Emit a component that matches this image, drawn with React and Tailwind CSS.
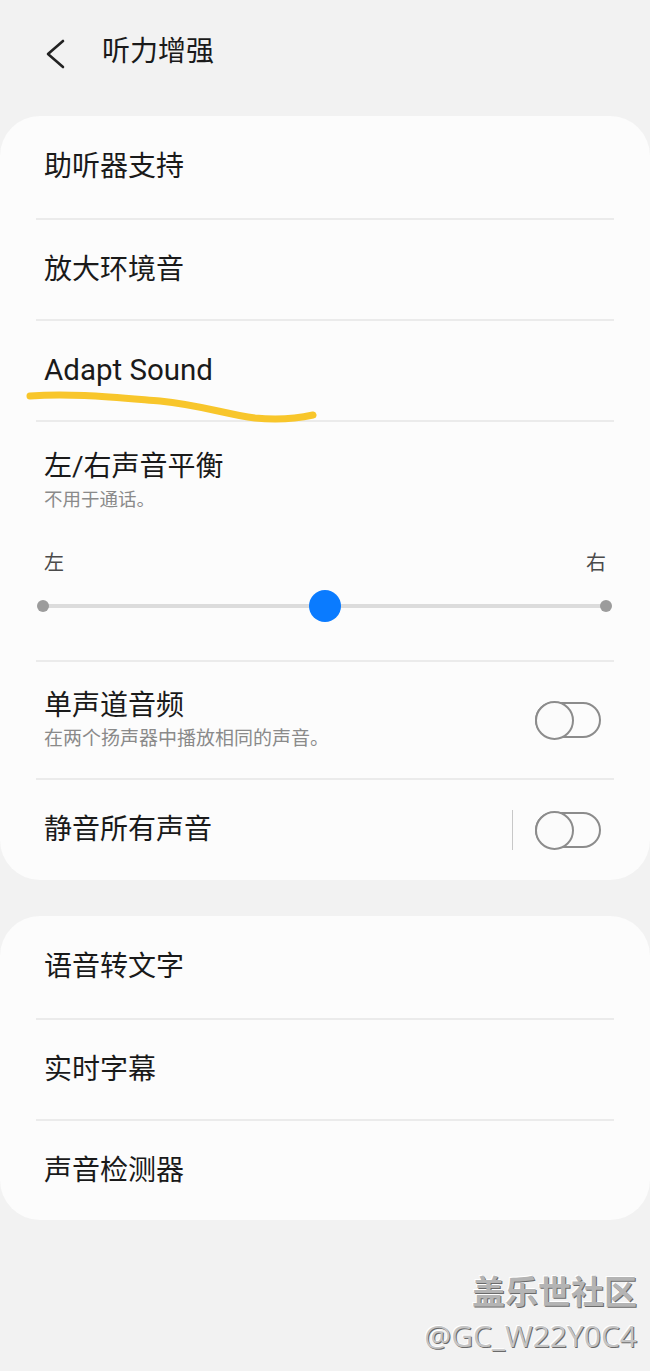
import React from 'react';

const font = { fontFamily: 'Roboto, "Noto Sans CJK SC", sans-serif' };

const Divider = () => <div className="h-[2px] bg-[#ebebeb] mx-[36px]" />;

const Row = ({ title, h = 'h-[101px]', size = 'text-[28px]' }) => (
    <div className={`${h} flex items-center px-[44px]`}>
        <span className={`${size} text-[#1a1a1a] leading-none`}>{title}</span>
    </div>
);

const Toggle = () => (
    <div className="relative w-[66px] h-[39px]">
        <div className="absolute left-0 right-0 top-[1px] h-[36px] rounded-full border-[2.5px] border-[#8c8c8c]" />
        <div className="absolute left-0 top-0 w-[39px] h-[39px] rounded-full border-[2.5px] border-[#8c8c8c] bg-[#fbfbfb]" />
    </div>
);

const App = () => {
    return (
        <div className="relative w-[650px] min-h-[1371px] bg-[#f2f2f2] overflow-hidden" style={font}>
            {/* header */}
            <div className="h-[116px] flex items-start pt-[34px]">
                <div className="w-[102px] flex pl-[44px]">
                    <svg width="24" height="30" viewBox="0 0 24 30" className="mt-[5px]">
                        <path d="M19 2 L4 15 L19 28" fill="none" stroke="#222" strokeWidth="2.6" strokeLinecap="round" strokeLinejoin="round" />
                    </svg>
                </div>
                <span className="text-[28px] text-[#1a1a1a] leading-[36px]">听力增强</span>
            </div>

            {/* card 1 */}
            <div className="bg-[#fcfcfc] rounded-[40px]">
                <Row title="助听器支持" h="h-[102px]" />
                <Divider />
                <Row title="放大环境音" h="h-[99px]" />
                <Divider />
                <Row title="Adapt Sound" h="h-[99px]" size="text-[29.5px]" />
                <Divider />

                {/* balance */}
                <div className="h-[238px] px-[44px] pt-[29px]">
                    <div className="text-[28px] text-[#1a1a1a] leading-[32px]">左/右声音平衡</div>
                    <div className="text-[18.5px] text-[#8a8a8a] leading-[24px] mt-[5px]">不用于通话。</div>
                    <div className="flex justify-between text-[20px] text-[#4a4a4a] leading-[24px] mt-[39px]">
                        <span>左</span>
                        <span>右</span>
                    </div>
                    <div className="relative h-[32px] mt-[15px] ml-[-7px] mr-[-6px]">
                        <div className="absolute left-[6px] right-[6px] top-[14px] h-[4px] bg-[#dcdcdc] rounded-full" />
                        <div className="absolute left-0 top-[10px] w-[12px] h-[12px] rounded-full bg-[#9c9c9c]" />
                        <div className="absolute right-0 top-[10px] w-[12px] h-[12px] rounded-full bg-[#9c9c9c]" />
                        <div className="absolute left-[272px] top-0 w-[32px] h-[32px] rounded-full bg-[#0a7bff]" />
                    </div>
                </div>
                <Divider />

                {/* mono */}
                <div className="h-[116px] flex items-center justify-between pl-[44px] pr-[49px]">
                    <div>
                        <div className="text-[28px] text-[#1a1a1a] leading-[32px]">单声道音频</div>
                        <div className="text-[19px] text-[#8a8a8a] leading-[24px] mt-[5px]">在两个扬声器中播放相同的声音。</div>
                    </div>
                    <Toggle />
                </div>
                <Divider />

                {/* mute all */}
                <div className="h-[100px] flex items-center justify-between pl-[44px] pr-[49px]">
                    <span className="text-[28px] text-[#1a1a1a] leading-none">静音所有声音</span>
                    <div className="flex items-center gap-[22px]">
                        <div className="w-[1.5px] h-[40px] bg-[#c8c8c8]" />
                        <Toggle />
                    </div>
                </div>
            </div>

            {/* card 2 */}
            <div className="bg-[#fcfcfc] rounded-[40px] mt-[36px]">
                <Row title="语音转文字" h="h-[102px]" />
                <Divider />
                <Row title="实时字幕" h="h-[99px]" />
                <Divider />
                <Row title="声音检测器" h="h-[99px]" />
            </div>

            {/* watermark */}
            <div className="flex flex-col items-end pr-[13px] mt-[52px]">
                <span className="text-[33px] font-bold text-[#b4b4b4] leading-[42px] [text-shadow:1px_1px_0_#6a6a6a,-1px_-1px_0_#ffffff]">盖乐世社区</span>
                <span className="text-[30px] text-[#c4c4c4] leading-[40px] mt-[2px] [text-shadow:1px_1px_0_#6a6a6a,-1px_-1px_0_#ffffff]" style={{ fontFamily: '"Open Sans", sans-serif' }}>@GC_W22Y0C4</span>
            </div>

            {/* yellow marker annotation */}
            <svg className="absolute left-0 top-0 pointer-events-none" width="650" height="460">
                <path d="M30 396 C 70 393, 110 397, 160 401 C 200 405, 225 414, 255 418 C 275 420, 295 419, 313 415"
                    fill="none" stroke="#f8c62b" strokeWidth="7" strokeLinecap="round" strokeLinejoin="round" />
            </svg>
        </div>
    );
};

export default App;
